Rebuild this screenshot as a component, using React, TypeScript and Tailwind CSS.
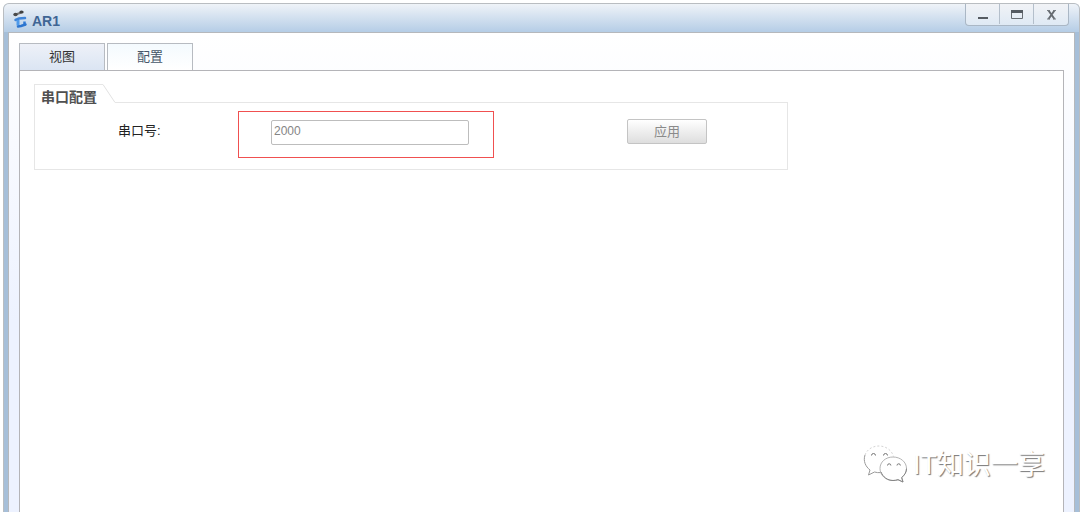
import { useState } from 'react'

function RouterIcon() {
  return (
    <svg className="h-6 w-4" viewBox="0 0 16 24" fill="none" aria-hidden="true">
      <path d="M3.500 8.500 9.500 6.500" stroke="#777" strokeWidth="2" />
      <ellipse cx="3.500" cy="8.500" rx="2.200" ry="1.700" fill="#4a4a4a" />
      <ellipse cx="9.500" cy="6" rx="2.200" ry="1.500" fill="#3f3f3f" />
      <path d="M3.500 14 7 12.500 13 12" stroke="#3f84d8" strokeWidth="2.500" strokeLinecap="round" />
      <path d="M6 14v5.500" stroke="#4f9aea" strokeWidth="3" />
      <path d="M12.500 15.500v4" stroke="#2f7ad6" strokeWidth="2.500" />
      <path d="M6 20.500 9 20l4.500-1.500" stroke="#2d75cf" strokeWidth="2.500" strokeLinecap="round" />
    </svg>
  )
}

function WindowControls() {
  const button = 'flex h-5 w-[34px] items-center justify-center'

  return (
    <div className="mr-[10px] flex h-[22px] self-start divide-x divide-[#b4bfcb] overflow-hidden rounded-b-[4px] border border-t-0 border-[#aab7c5] bg-gradient-to-b from-[#f1f3f6] to-[#dfe9f4]">
      <button type="button" aria-label="最小化" className={button}>
        <svg className="h-4 w-4" viewBox="0 0 16 16">
          <path d="M3 12h10" stroke="#555b62" strokeWidth="2" />
        </svg>
      </button>
      <button type="button" aria-label="最大化" className={button}>
        <svg className="h-4 w-4" viewBox="0 0 16 16" fill="none">
          <path d="M2.500 4.500h11v8h-11z" stroke="#686d73" />
          <path d="M2 5.500h12" stroke="#555b62" strokeWidth="3" />
        </svg>
      </button>
      <button type="button" aria-label="关闭" className={button}>
        <svg className="h-4 w-4" viewBox="0 0 16 16" fill="none">
          <path d="M5.500 4.500l6 8.500M11.500 4.500l-6 8.500" stroke="#666b71" strokeWidth="2" />
          <path d="M4 4.500h3M10 4.500h3M4 13h3M10 13h3" stroke="#777c82" />
        </svg>
      </button>
    </div>
  )
}

function Watermark() {
  return (
    <div className="pointer-events-none absolute right-[34px] bottom-[27px] flex items-center gap-1.5">
      <svg className="h-10 w-11" viewBox="0 0 44 40" fill="none" aria-hidden="true">
        <path d="M2 12C4 6.500 9.500 3 16 3c7 0 13 4.500 14.500 10.500" stroke="#d4d4d4" strokeDasharray="2 2" />
        <path d="M2 12c-2 6 .5 11.500 5 15l-1.500 5 6-3c2 .6 4 .8 6 .6" stroke="#9a9a9a" />
        <path
          d="M30 14c-7.500 0-13 5-13 11.500S22.500 37.500 30 37.500c2 0 3.500-.3 5-.8l5 2.300-1.300-4.500c3-2.300 4.800-5.500 4.800-9C43.500 19 37.500 14 30 14z"
          fill="#fff"
          stroke="#b5b5b5"
        />
        <path d="M18 29c2 5 6.500 8.500 12 8.500 2 0 3.500-.3 5-.8l5 2.300-1.300-4.500c3-2.300 4.800-5.500 4.800-9" stroke="#858585" />
        <g stroke="#777">
          <path d="M8.500 12.500a2 2 0 0 1 4 0M20.500 12.500a2 2 0 0 1 4 0" />
          <path d="M24.500 22.500a1.700 1.700 0 0 1 3.400 0M34 22.500a1.700 1.700 0 0 1 3.400 0" />
        </g>
      </svg>
      <span className="pt-1 text-[27px] leading-10 text-white [text-shadow:1px_1px_1px_#777]">IT知识一享</span>
    </div>
  )
}

const tabs = ['视图', '配置']

export default function App() {
  const [active, setActive] = useState('配置')
  const [port, setPort] = useState('2000')

  return (
    <div className="flex min-h-screen flex-col bg-white pt-[3px] pb-0.5 pl-[3px] font-['Liberation_Sans','Noto_Sans_CJK_SC',sans-serif] text-[13px]">
      <div className="relative flex flex-1 flex-col rounded-t-[6px] border border-b-0 border-[#b9bdc1] bg-[#a6bfd9]">
        {/* Title bar */}
        <header className="flex h-7 items-center rounded-t-[5px] bg-gradient-to-b from-[#eff3f8] to-[#b5cde6] pl-2">
          <RouterIcon />
          <h1 className="ml-1 flex-1 pt-1.5 text-sm leading-5 font-bold text-[#3f6595]">AR1</h1>
          <WindowControls />
        </header>

        <main className="mx-1 flex flex-1 flex-col border border-b-0 border-[#b5b8bc] bg-gradient-to-b from-white to-[#edf2ff] to-60%">
          <div className="flex flex-1 flex-col px-[10px] pt-[10px]">
            <div role="tablist" className="flex gap-0.5">
              {tabs.map((tab) => (
                <button
                  key={tab}
                  type="button"
                  role="tab"
                  aria-selected={tab === active}
                  onClick={() => setActive(tab)}
                  className={
                    tab === active
                      ? 'h-[27px] w-[86px] border border-b-0 border-[#b7bbc1] bg-gradient-to-b from-[#f4fafe] to-white text-[#465669]'
                      : 'h-[27px] w-[86px] border border-b-0 border-[#b7bbc1] bg-gradient-to-b from-[#eef1f8] to-[#dbe5f3] text-[#333]'
                  }
                >
                  {tab}
                </button>
              ))}
            </div>

            <div className="flex-1 border border-b-0 border-[#b4b4b8] bg-white px-[14px] pt-[13px]">
              {/* Serial port group */}
              <section className="max-w-[754px]">
                <div className="flex h-[19px]">
                  <h2 className="w-[69px] border-t border-l border-[#e6e6e6] pt-0.5 pl-1.5 text-sm leading-5 font-bold text-[#505050]">
                    串口配置
                  </h2>
                  <svg className="h-[19px] w-3" viewBox="0 0 12 19" fill="none" aria-hidden="true">
                    <path d="M0 .5 12 18.500" stroke="#e2e2e2" />
                  </svg>
                  <div className="flex-1 border-b border-[#e6e6e6]" />
                </div>
                <form
                  className="flex items-start border border-t-0 border-[#e6e6e6] pt-2 pb-[11px] pl-[83px]"
                  onSubmit={(e) => e.preventDefault()}
                >
                  <label htmlFor="port" className="mt-2 w-[120px] leading-6 text-[#222]">
                    串口号:
                  </label>
                  <div className="border border-[#f05050] pt-2 pr-6 pb-3 pl-8">
                    <input
                      id="port"
                      type="text"
                      value={port}
                      onChange={(e) => setPort(e.target.value)}
                      className="block h-[25px] w-[198px] rounded-[2px] border border-[#bdbdbd] px-0.5 pb-1 text-xs text-[#858585] outline-none"
                    />
                  </div>
                  <button
                    type="submit"
                    className="mt-2 ml-[133px] h-[25px] w-20 rounded-[2px] border border-[#c4c4c4] bg-gradient-to-b from-white to-[#dedede] text-[#8a8a8a]"
                  >
                    应用
                  </button>
                </form>
              </section>
            </div>
          </div>
        </main>

        <Watermark />
      </div>
    </div>
  )
}
